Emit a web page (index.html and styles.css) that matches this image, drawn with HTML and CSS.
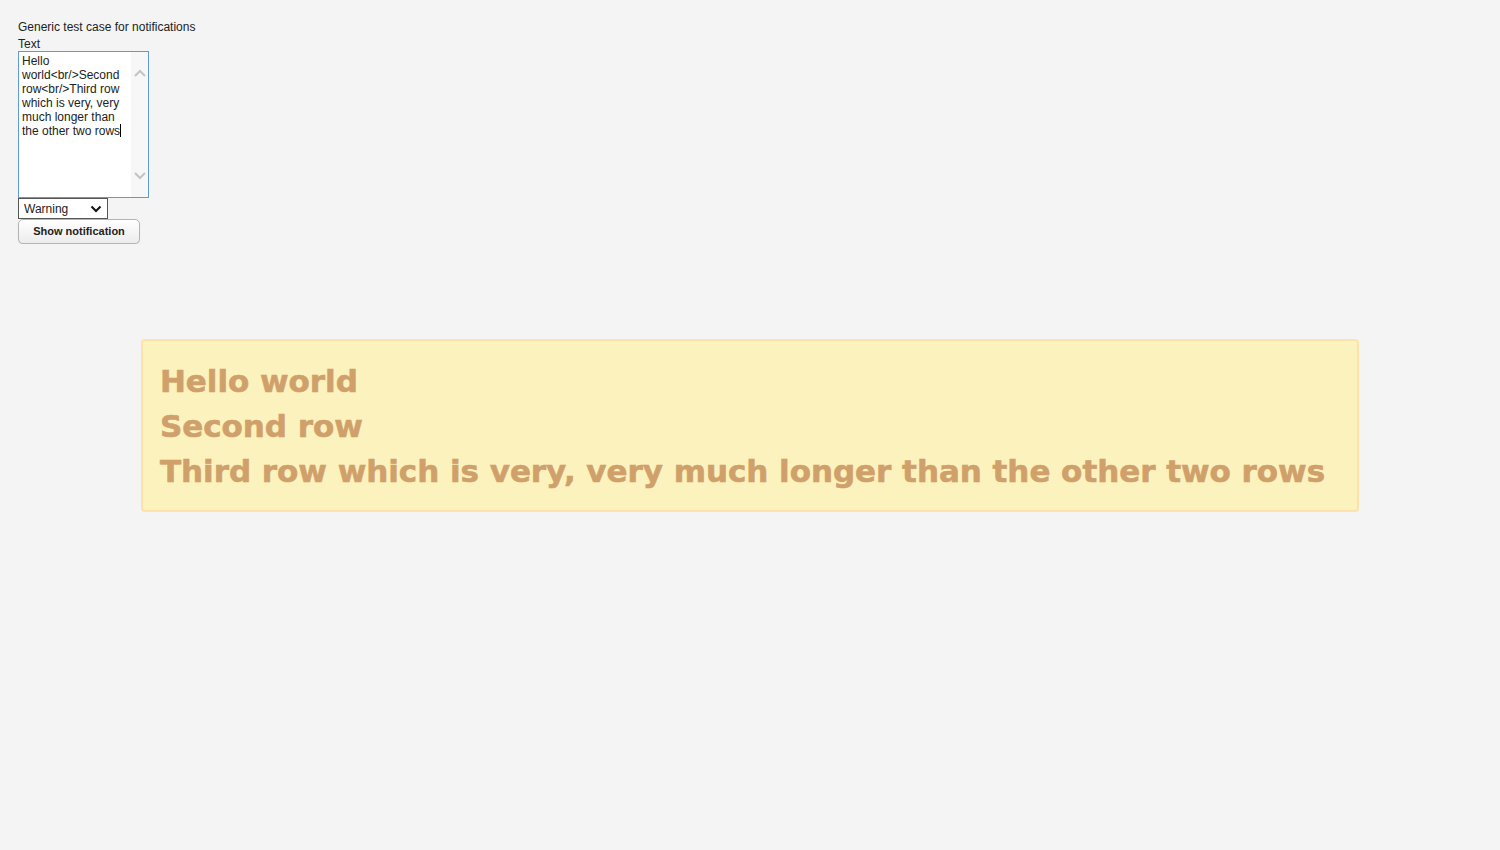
FILE: index.html
```html
<!DOCTYPE html>
<html>
<head>
<meta charset="utf-8">
<link rel="stylesheet" href="styles.css">
</head>
<body>
<div class="app">
  <div class="caption">Generic test case for notifications</div>
  <div class="label">Text</div>
  <div class="textarea">
    <div class="ta-text">Hello world&lt;br/&gt;Second row&lt;br/&gt;Third row which is very, very much longer than the other two rows<span class="caret"></span></div>
    <div class="ta-scroll">
      <svg width="12" height="8" viewBox="0 0 12 8"><path d="M1 7 L6 2 L11 7" fill="none" stroke="#c4c4c4" stroke-width="2"/></svg>
      <svg width="12" height="8" viewBox="0 0 12 8"><path d="M1 1 L6 6 L11 1" fill="none" stroke="#c4c4c4" stroke-width="2"/></svg>
    </div>
  </div>
  <div class="select">
    <span>Warning</span>
    <svg width="12" height="8" viewBox="0 0 12 8"><path d="M1.5 1.5 L6 6 L10.5 1.5" fill="none" stroke="#111" stroke-width="2"/></svg>
  </div>
  <button class="btn">Show notification</button>
</div>
<div class="overlay">
  <div class="notification">
    <div class="n-line">Hello world</div>
    <div class="n-line">Second row</div>
    <div class="n-line">Third row which is very, very much longer than the other two rows</div>
  </div>
</div>
</body>
</html>
```
FILE: styles.css
```css
html, body {
  margin: 0;
  padding: 0;
  background: #f4f4f4;
  font-family: "Liberation Sans", Arial, sans-serif;
  font-size: 12px;
  color: #222;
}
.app {
  padding: 20px 0 0 18px;
  display: flex;
  flex-direction: column;
  align-items: flex-start;
}
.caption {
  line-height: 15px;
}
.label {
  line-height: 14px;
  margin-top: 2px;
}
.textarea {
  width: 129px;
  height: 145px;
  border: 1px solid #5e9bd6;
  background: #fff;
  display: flex;
}
.ta-text {
  flex: 1;
  padding: 2px 0 0 3px;
  line-height: 14px;
  color: #222;
  overflow: hidden;
}
.caret {
  display: inline-block;
  width: 1px;
  height: 13px;
  background: #000;
  vertical-align: -2px;
}
.ta-scroll {
  width: 17px;
  background: #f7f7f7;
  display: flex;
  flex-direction: column;
  justify-content: space-between;
  align-items: center;
  padding: 17px 0 17px;
}
.select {
  height: 19px;
  border: 1px solid #555;
  background: #fff;
  display: flex;
  align-items: center;
  justify-content: space-between;
  padding: 0 5px 0 5px;
  box-sizing: content-box;
  width: 78px;
  font-size: 12px;
  color: #222;
}
.btn {
  margin-top: 0;
  width: 122px;
  height: 25px;
  border: 1px solid #b3b3b3;
  border-radius: 5px;
  background: linear-gradient(#ffffff, #ececec);
  box-shadow: 0 1px 1px rgba(0,0,0,0.12);
  font-family: "Liberation Sans", Arial, sans-serif;
  font-weight: bold;
  font-size: 11px;
  color: #222;
  padding: 0 0 2px;
}
.overlay {
  position: fixed;
  inset: 0;
  display: flex;
  align-items: center;
  justify-content: center;
  pointer-events: none;
}
.notification {
  background: #fcf2be;
  border: 2px solid #fde3a9;
  border-radius: 4px;
  padding: 18px 32px 16px 17px;
  color: #d0a06b;
  font-family: "DejaVu Sans", sans-serif;
  font-weight: bold;
  font-size: 31px;
  line-height: 45px;
  letter-spacing: -0.04px;
  -webkit-text-stroke: 0.6px #d0a06b;
}
.n-line {
  white-space: nowrap;
}
```
